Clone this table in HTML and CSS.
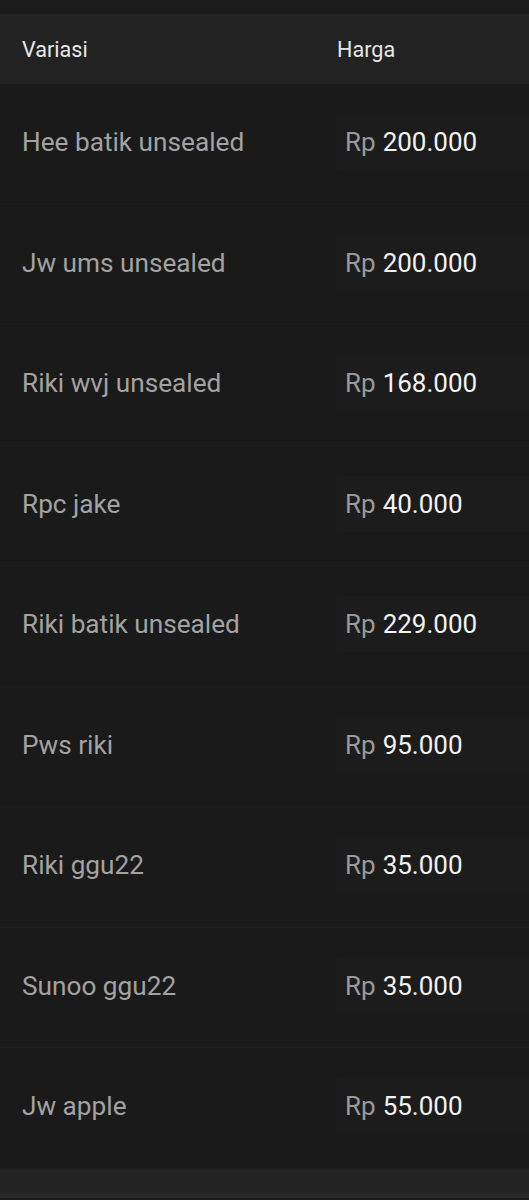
FILE: index.html
```html
<!DOCTYPE html>
<html lang="id">
<head>
  <meta charset="UTF-8" />
  <meta name="viewport" content="width=device-width, initial-scale=1.0" />
  <title>Variasi Harga</title>
  <link rel="stylesheet" href="styles.css">
</head>
<body>
  <div class="top-strip"></div>
  <div class="table-head">
    <div class="col-name">Variasi</div>
    <div class="col-price">Harga</div>
  </div>
  <ul class="rows" id="rows"></ul>
  <div class="table-foot"></div>

  <script>
    const items = [
      ["Hee batik unsealed", "200.000"],
      ["Jw ums unsealed", "200.000"],
      ["Riki wvj unsealed", "168.000"],
      ["Rpc jake", "40.000"],
      ["Riki batik unsealed", "229.000"],
      ["Pws riki", "95.000"],
      ["Riki ggu22", "35.000"],
      ["Sunoo ggu22", "35.000"],
      ["Jw apple", "55.000"]
    ];
    const rows = document.getElementById("rows");
    items.forEach(item => {
      const li = document.createElement("li");
      li.className = "row";
      li.innerHTML = `
        <div class="col-name name">${item[0]}</div>
        <div class="price-box"><span class="cur">Rp</span> <span class="amount">${item[1]}</span></div>
      `;
      rows.appendChild(li);
    });
  </script>
</body>
</html>
```

FILE: styles.css
```css
body {
  margin: 0;
  background-color: #1a1a1a;
  font-family: Roboto, 'Noto Sans', sans-serif;
  overflow: hidden;
}
.top-strip {
  height: 14px;
  background-color: #1b1b1b;
}
.table-head {
  display: flex;
  align-items: center;
  height: 70px;
  background-color: #222222;
  color: #e6e6e6;
  font-size: 21.6px;
  padding-left: 22px;
}
.col-name {
  width: 315px;
  flex-shrink: 0;
}
.rows {
  list-style: none;
  margin: 0;
  padding: 0;
}
.row {
  display: flex;
  align-items: center;
  height: 120.5px;
  box-sizing: border-box;
  padding: 0 0 3px 22px;
  border-bottom: 1px solid #1f1f1f;
  background-color: #1a1a1a;
}
.name {
  width: 314px;
  color: #a2a2a2;
  font-size: 26.2px;
}
.price-box {
  flex: 1;
  height: 56px;
  display: flex;
  align-items: center;
  gap: 7px;
  padding-left: 9px;
  background-color: #1c1c1c;
  border-radius: 3px 0 0 3px;
  font-size: 26px;
}
.cur {
  color: #999999;
}
.amount {
  color: #f2f2f2;
}
.table-foot {
  height: 25px;
  background-color: #232323;
  border-bottom: 4px solid #2a2a2a;
}
```
